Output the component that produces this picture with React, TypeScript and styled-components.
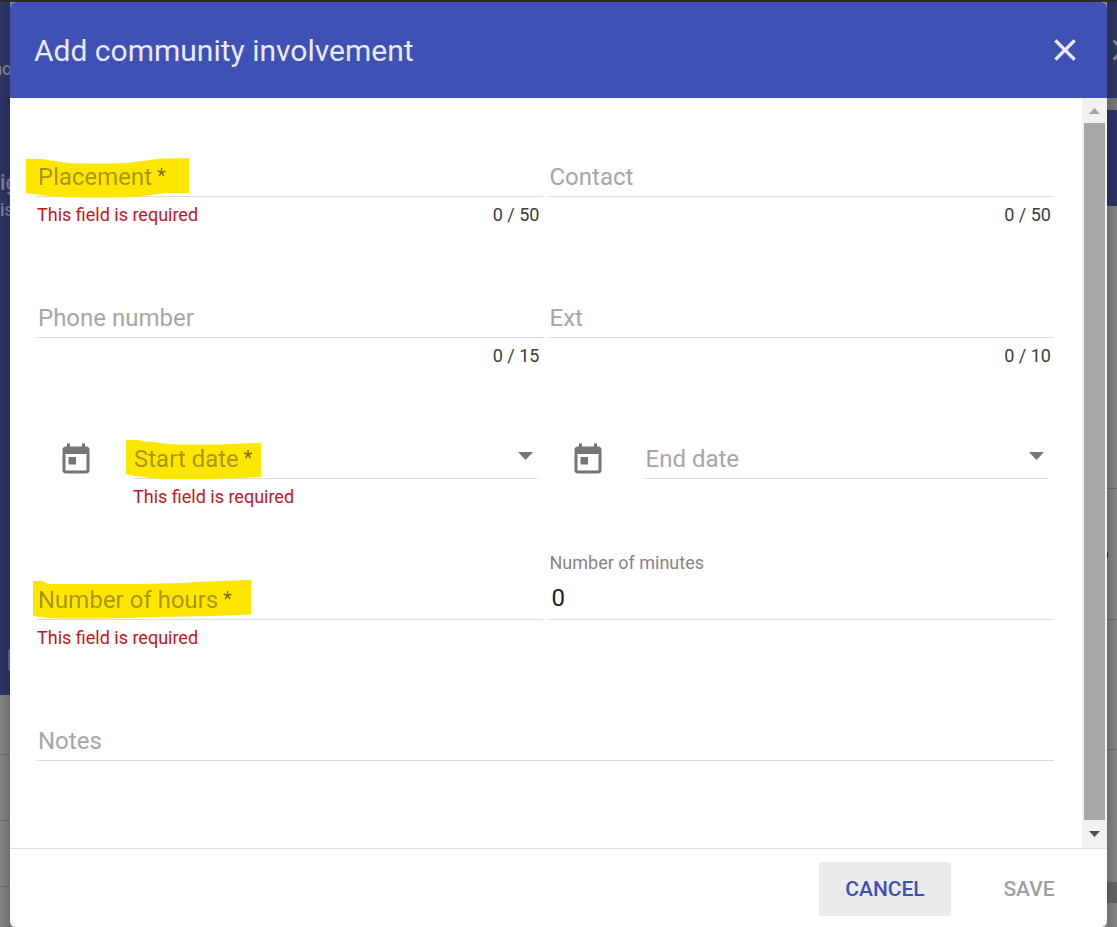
import React, { ReactNode } from "react";
import styled, { createGlobalStyle } from "styled-components";

const GlobalStyle = createGlobalStyle`
  *, *::before, *::after { box-sizing: border-box; }
  body { margin: 0; background: #858585; font-family: Roboto, "Liberation Sans", sans-serif; }
  button, input { font-family: inherit; }
`;

const Page = styled.div`
  display: grid;
  grid-template-columns: 10px minmax(0, 1fr) 10px;
  min-height: 100vh;
  border-top: 2px solid #2a2a2c;
`;

const Strip = styled.div<{ $side: "left" | "right" }>`
  position: relative;
  display: flex;
  flex-direction: column;
  overflow: hidden;
  background: #858585;
  &::after {
    content: "";
    position: absolute;
    inset: 0;
    background: linear-gradient(to ${(p) => p.$side}, rgba(0, 0, 0, 0.16), rgba(0, 0, 0, 0.02));
  }
`;

const Band = styled.div<{ $height: number; $color: string; $lined?: boolean }>`
  position: relative;
  flex: none;
  height: ${(p) => p.$height}px;
  background: ${(p) => p.$color};
  border-bottom: ${(p) => (p.$lined ? "1px solid #6d6d6d" : "0")};
`;

const Peek = styled.span<{ $left: number; $top: number; $size: number }>`
  position: absolute;
  left: ${(p) => p.$left}px;
  top: ${(p) => p.$top}px;
  font-size: ${(p) => p.$size}px;
  line-height: 24px;
  font-weight: 500;
  color: #82859a;
  white-space: nowrap;
`;

const PeekIcon = styled.svg`
  position: absolute;
  left: -2px;
  top: 30px;
  width: 36px;
  height: 36px;
  fill: #85899f;
`;

const PeekBox = styled.span`
  position: absolute;
  right: 0;
  bottom: 24px;
  width: 2px;
  height: 22px;
  border-radius: 2px 0 0 2px;
  background: #5d6f92;
`;

const PeekDot = styled.span`
  position: absolute;
  left: -8px;
  top: 60px;
  width: 9px;
  height: 12px;
  border-radius: 50%;
  background: #111;
`;

const Dialog = styled.form`
  display: flex;
  flex-direction: column;
  min-width: 0;
  overflow: hidden;
  border-radius: 6px;
  background: #fff;
`;

const Header = styled.header`
  display: flex;
  align-items: center;
  justify-content: space-between;
  height: 96px;
  padding: 0 24px;
  background: #3f51b5;
  color: #e8eaf9;
`;

const Title = styled.h2`
  margin: 0;
  padding-top: 2px;
  font-size: 30px;
  line-height: 36px;
  font-weight: 400;
`;

const IconButton = styled.button`
  flex: none;
  width: 36px;
  height: 36px;
  padding: 0;
  border: 0;
  background: none;
  color: inherit;
  svg { display: block; width: 36px; height: 36px; fill: currentColor; }
`;

const Body = styled.div`
  display: flex;
  flex: 1;
`;

const Fields = styled.div`
  flex: 1;
  min-width: 0;
  padding: 30px 28px 15px 27px;
`;

const Row = styled.div<{ $single?: boolean }>`
  display: grid;
  grid-template-columns: ${(p) => (p.$single ? "1fr" : "1fr 1fr")};
  column-gap: 6px;
  height: 141px;
`;

const FieldBox = styled.div`
  display: grid;
  grid-template-rows: 30px 38px 1px 36px;
  flex: 1;
  align-content: start;
  min-width: 0;
`;

const Label = styled.label<{ $floating?: boolean }>`
  grid-column: 1;
  grid-row: ${(p) => (p.$floating ? 1 : 2)};
  z-index: 1;
  justify-self: start;
  position: relative;
  padding: ${(p) => (p.$floating ? "0 1px" : "3px 1px")};
  font-size: ${(p) => (p.$floating ? 18 : 24)}px;
  line-height: ${(p) => (p.$floating ? 24 : 32)}px;
  color: ${(p) => (p.$floating ? "#858585" : "#a6a6a6")};
  white-space: nowrap;
`;

const Star = styled.span`
  font-size: 20px;
  line-height: 30px;
  vertical-align: top;
  color: #777;
`;

const Input = styled.input`
  grid-column: 1;
  grid-row: 2;
  width: 100%;
  min-width: 0;
  padding: 0 3px 4px;
  border: 0;
  outline: 0;
  background: transparent;
  font-size: 24px;
  line-height: 32px;
  color: #212121;
`;

const Rule = styled.div`
  grid-column: 1;
  grid-row: 3;
  background: #dcdcdc;
`;

const Messages = styled.div`
  grid-column: 1;
  grid-row: 4;
  display: flex;
  justify-content: space-between;
  padding: 6px 3px 0 0;
  font-size: 18px;
  line-height: 24px;
  color: #3c3c3c;
`;

const ErrorText = styled.span`
  color: #c8141a;
`;

const DateWrap = styled.div`
  display: flex;
  gap: 39px;
  min-width: 0;
  padding: 0 6px 0 21px;
`;

const DateButton = styled(IconButton)`
  margin-top: 32px;
  color: #757575;
`;

const Arrow = styled.button`
  grid-column: 1;
  grid-row: 2;
  z-index: 1;
  justify-self: end;
  align-self: center;
  padding: 0 4px 6px;
  border: 0;
  background: none;
  svg { display: block; width: 15px; height: 8px; fill: #757575; }
`;

const Marker = styled.svg<{ $left: number; $top: number }>`
  position: absolute;
  left: ${(p) => p.$left}px;
  top: ${(p) => p.$top}px;
  fill: #ffe600;
  mix-blend-mode: multiply;
  pointer-events: none;
`;

const Scrollbar = styled.div`
  display: flex;
  flex-direction: column;
  flex: none;
  width: 25px;
  padding: 0 2px;
  background: #f1f1f1;
`;

const Thumb = styled.div`
  flex: 1;
  background: #a8a8a8;
`;

const ScrollEnd = styled.div<{ $height: number }>`
  display: flex;
  align-items: center;
  justify-content: center;
  height: ${(p) => p.$height}px;
`;

const Footer = styled.footer`
  display: flex;
  justify-content: flex-end;
  gap: 12px;
  padding: 13px 12px 11px;
  border-top: 1px solid #dedede;
`;

const Action = styled.button<{ $focused?: boolean }>`
  min-width: 132px;
  height: 54px;
  padding: 0 9px;
  border: 0;
  border-radius: 3px;
  background: ${(p) => (p.$focused ? "#ebebeb" : "transparent")};
  color: ${(p) => (p.$focused ? "#3f51b5" : "#a0a0a0")};
  font-size: 21px;
  line-height: 30px;
  font-weight: 500;
  text-transform: uppercase;
`;

const CLOSE = "M19 6.41L17.59 5 12 10.59 6.41 5 5 6.41 10.59 12 5 17.59 6.41 19 12 13.41 17.59 19 19 17.59 13.41 12z";
const TODAY =
  "M19 3h-1V1h-2v2H8V1H6v2H5c-1.11 0-1.99.9-1.99 2L3 19c0 1.1.89 2 2 2h14c1.1 0 2-.9 2-2V5c0-1.1-.9-2-2-2zm0 16H5V8h14v11zM7 10h5v5H7z";

type FieldProps = {
  id: string;
  label: string;
  required?: boolean;
  error?: string;
  counter?: string;
  value?: string;
  marker?: ReactNode;
  children?: ReactNode;
};

function Field({ id, label, required, error, counter, value, marker, children }: FieldProps) {
  return (
    <FieldBox>
      <Label htmlFor={id} $floating={value !== undefined}>
        {label}
        {required && <Star> *</Star>}
        {marker}
      </Label>
      <Input id={id} type="text" defaultValue={value} />
      {children}
      <Rule />
      <Messages>
        <ErrorText>{error}</ErrorText>
        <span>{counter}</span>
      </Messages>
    </FieldBox>
  );
}

function DateField(props: FieldProps) {
  return (
    <DateWrap>
      <DateButton type="button" aria-label={`Pick ${props.label}`}>
        <svg viewBox="0 0 24 24"><path d={TODAY} /></svg>
      </DateButton>
      <Field {...props}>
        <Arrow type="button" aria-label={`Open ${props.label}`}>
          <svg viewBox="0 0 15 8"><path d="M0 0h15L7.500 8z" /></svg>
        </Arrow>
      </Field>
    </DateWrap>
  );
}

const REQUIRED = "This field is required";

export default function App() {
  return (
    <>
      <GlobalStyle />
      <Page>
        <Strip $side="left" aria-hidden>
          <Band $height={96} $color="#2f3868"><Peek $left={-8} $top={55} $size={18}>ho</Peek></Band>
          <Band $height={597} $color="#2d3567">
            <Peek $left={0} $top={73} $size={22}>ig</Peek>
            <Peek $left={0} $top={100} $size={18}>is</Peek>
            <PeekBox />
          </Band>
          <Band $height={60} $color="#858585" $lined />
          <Band $height={66} $color="#858585" $lined />
          <Band $height={66} $color="#858585" $lined />
        </Strip>

        <Dialog onSubmit={(e) => e.preventDefault()}>
          <Header>
            <Title>Add community involvement</Title>
            <IconButton type="button" aria-label="Close">
              <svg viewBox="0 0 24 24"><path d={CLOSE} stroke="currentColor" strokeWidth="0.4" /></svg>
            </IconButton>
          </Header>
          <Body>
            <Fields>
              <Row>
                <Field
                  id="placement" label="Placement" required error={REQUIRED} counter="0 / 50"
                  marker={
                    <Marker $left={-11} $top={0} width="163" height="40" viewBox="0 0 163 40">
                      <path d="M0 1H15C30 3 38 5 50 5.500H90C108 5 120 2 134 .800L163 0V35H142C122 37 112 39.500 96 39.500H46C28 39 14 37 0 35z" />
                    </Marker>
                  }
                />
                <Field id="contact" label="Contact" counter="0 / 50" />
              </Row>
              <Row>
                <Field id="phone" label="Phone number" counter="0 / 15" />
                <Field id="ext" label="Ext" counter="0 / 10" />
              </Row>
              <Row>
                <DateField
                  id="start" label="Start date" required error={REQUIRED}
                  marker={
                    <Marker $left={-7} $top={0} width="135" height="40" viewBox="0 0 135 40">
                      <path d="M0 0H12L18 1.500C30 2 38 4 50 4.500H90C106 4.500 120 3 135 3V37C110 38 90 39 75 39H38C24 38 12 37 0 34z" />
                    </Marker>
                  }
                />
                <DateField id="end" label="End date" />
              </Row>
              <Row>
                <Field
                  id="hours" label="Number of hours" required error={REQUIRED}
                  marker={
                    <Marker $left={-4} $top={-1} width="218" height="39" viewBox="0 0 218 39">
                      <path d="M0 1H10C12 3 14 4 18 4H104L150 3C176 1 196 1 218 0V34.500L180 36L124 37L72 38.500H24C12 38 6 37 0 36z" />
                    </Marker>
                  }
                />
                <Field id="minutes" label="Number of minutes" value="0" />
              </Row>
              <Row $single>
                <Field id="notes" label="Notes" />
              </Row>
            </Fields>
            <Scrollbar aria-hidden>
              <ScrollEnd $height={25}>
                <svg width="11" height="6" viewBox="0 0 11 6"><path d="M0 6L5.500 0L11 6z" fill="#a3a3a3" /></svg>
              </ScrollEnd>
              <Thumb />
              <ScrollEnd $height={28}>
                <svg width="11" height="6" viewBox="0 0 11 6"><path d="M0 0H11L5.500 6z" fill="#505050" /></svg>
              </ScrollEnd>
            </Scrollbar>
          </Body>
          <Footer>
            <Action type="button" $focused>Cancel</Action>
            <Action type="submit" disabled>Save</Action>
          </Footer>
        </Dialog>

        <Strip $side="right" aria-hidden>
          <Band $height={96} $color="#2f3868">
            <PeekIcon viewBox="0 0 24 24"><path d={CLOSE} /></PeekIcon>
          </Band>
          <Band $height={12} $color="#7d7b77" />
          <Band $height={96} $color="#2d3567" />
          <Band $height={283} $color="#858585" $lined />
          <Band $height={131} $color="#858585" $lined><PeekDot /></Band>
          <Band $height={130} $color="#858585" $lined />
          <Band $height={132} $color="#858585" />
          <Band $height={21} $color="#666" />
        </Strip>
      </Page>
    </>
  );
}
